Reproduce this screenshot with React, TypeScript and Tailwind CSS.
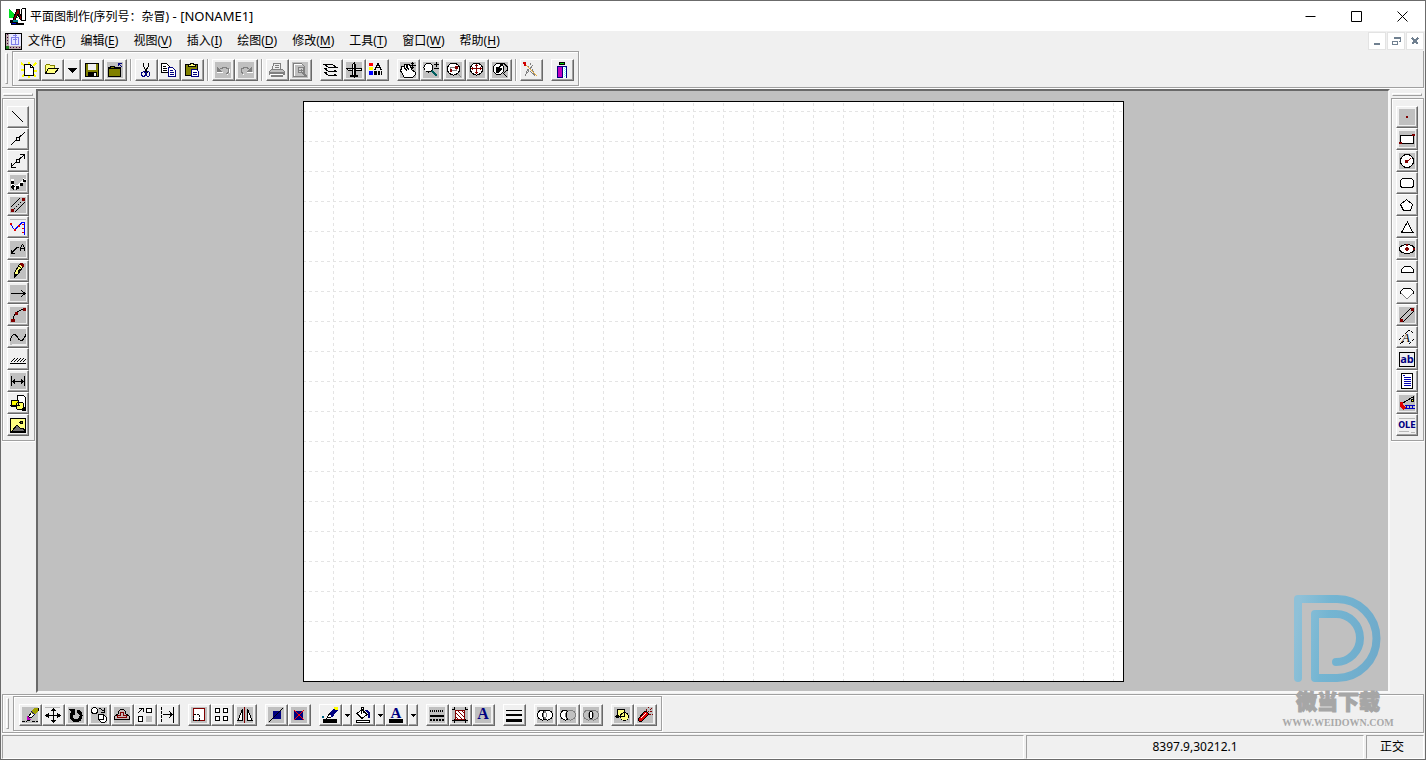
import React from "react";

type StrokeProps = { d: string; c?: string; f?: string; w?: number; dash?: string };

const P = ({ d, c = "#000", f = "none", w = 1, dash }: StrokeProps) => (
  <path d={d} stroke={c} fill={f} strokeWidth={w} strokeDasharray={dash} />
);
const F = ({ d, c = "#000" }: { d: string; c?: string }) => <path d={d} fill={c} />;
const G = () => <rect width="16" height="16" fill="#c0c0c0" />;

const NAVY = "#000080";
const RED = "#800000";
const OLIVE = "#808000";
const GREY = "#808080";
const PALE = "#ffff80";

const icons: Record<string, React.ReactNode> = {
  new: (<><P d="M0 1l4 3M7.500 0v3M15 1l-3 3M0 8h3M12 9h4M1 15l3-3M15 15l-3-3M7.500 13v3" c="#ffff00" w={2} /><P d="M3.500 2.500h6l3 3v8h-9z" f="#fff" /><P d="M9.500 2.500v3h3" /></>),
  open: (<><P d="M1.500 11.500v-8l1-1h3l1 1h4v2" f={PALE} c={OLIVE} /><P d="M1.500 11.500l3-5h10l-4 5z" f={PALE} c="#000" /></>),
  save: (<><P d="M1.500 1.500h13v13h-13z" f={OLIVE} /><F d="M4 2h8v6H4z" c="#efefef" /><F d="M4 10h9v4H4z" /><F d="M10 11h2v3h-2z" c="#efefef" /></>),
  close: (<><G /><P d="M1.500 14.500v-9h2v-1h4v1h6v9z" f={OLIVE} /><P d="M2 6.500h11" /><P d="M15 5L11.500 1.500M11.500 4v-2.500H15" c={NAVY} /></>),
  cut: (<><P d="M5.500 1v3l4 7M10.500 1v3l-4 7" /><P d="M5.500 9.500h1v1h1v3h-1v1h-2v-1h-1v-3h1zM9.500 9.500h1l1 1v3l-1 1h-1l-1-1v-3z" c={NAVY} /></>),
  copy: (<><P d="M.5 1.500h5l3 3v6h-8z" f="#fff" /><P d="M2 4.500h3M2 6.500h4M2 8.500h4" /><P d="M7.500 5.500h4l3 3v6h-7z" f="#fff" c={NAVY} /><P d="M9 8.500h3M9 10.500h4M9 12.500h4" c={NAVY} /></>),
  paste: (<><P d="M1.500 2.500h12v11h-12z" f={OLIVE} /><P d="M4.500 4.500v-2h2v-1h3v1h2v2z" f={PALE} /><P d="M7.500 7.500h5l2 2v5h-7z" f="#fff" c={NAVY} /><P d="M9 10.500h4M9 12.500h4" c={NAVY} /></>),
  undo: (<><G /><P d="M5 6.500h2v-1h4v1h2v4h-1v1h-1" c={GREY} /><F d="M2 4l5 6H2z" c={GREY} /><P d="M2 10.500h6M14.500 7v4M12 12.500h1" c="#fff" /></>),
  redo: (<><G /><P d="M11 6.500H9v-1H5v1H3v4h1v1h1" c={GREY} /><F d="M14 4l-5 6h5z" c={GREY} /><P d="M9 10.500h6M5 12.500h1" c="#fff" /></>),
  print: (<><P d="M3.500 7l1-6h7v6" c={GREY} f="#efefef" /><P d="M6 3.500h4M6 5.500h4" c={GREY} /><P d="M.5 9.500l2-2h11l2 2v3H.500z" c={GREY} f="#c0c0c0" /><P d="M1 11h14M2 14h12" c={GREY} w={2} /><P d="M1 12.500h13" c="#fff" /></>),
  preview: (<><G /><P d="M1.500 1.500h8l3 3v10h-11z" c={GREY} /><P d="M2.500 14V2.500h7" c="#fff" /><circle cx="9" cy="8" r="3" fill="#d0d0d0" stroke={GREY} /><P d="M7 8.500h4M9 6.500v4" c={GREY} /><P d="M11 11l4 4" c={GREY} w={2} /></>),
  layers: (<><P d="M1 2.500h8l5 3H6zM1 6.500l5 3h8M1 10.500l5 3h8M1 6.500h3M1 10.500h3M11 8.500l3 1M11 12.500l3 1" /></>),
  align: (<><G /><P d="M6.500 2.500l1-1h1l1 1v12h-3zM.500 6.500h15v2h-6M6 8.500H2.500l-2-2M4.500 13.500h7v1h-7z" f="#efefef" /><P d="M8.500 0v16" /></>),
  props: (<><F d="M0 1h4v3H0z" c="#ff0000" /><F d="M0 5h4v3H0z" c="#ffff00" /><F d="M0 9h4v4H0z" c="#0000ff" /><P d="M5 7.500h1l3-6 3 6h1M7 5.500h4" /><F d="M5 9h3v4H5zM9 9h2v4H9zM12 9h1v4h-1z" /></>),
  pan: (<><G /><P d="M4 15L2 11 0 8l2-1L1 4h2l1 1V2h2l2 4-1-4h2l3 6 3 2v3l-2 2z" f="#fff" /><P d="M4 5l3 4M6 4l3 4" /><P d="M12.500 0v7M9 3.500h7M11 1.500h3M11 5.500h3" /></>),
  zoom: (<><G /><circle cx="5.500" cy="5.500" r="4.500" fill="#fff" stroke="#000" /><P d="M9 9l5 5" w={2} c="#006060" /><P d="M13.500 0v5M11 2.500h5M11 6.500h5" /></>),
  zoomWindow: (<><G /><circle cx="7.500" cy="7" r="6" fill="#fff" stroke="#000" /><P d="M4.500 5.500h6v3h-6z" c={GREY} /><F d="M9 4h3v3h-3zM4 7h2v3H4z" c={RED} /><P d="M12 12l3 3" c={GREY} /></>),
  zoomAll: (<><G /><circle cx="7.500" cy="7" r="6" fill="#fff" stroke="#000" /><P d="M7.500 2v10M2 6.500h11M6 3.500h3M6 10.500h3M3.500 5v3M11.500 5v3" c={RED} /></>),
  zoomPrev: (<><G /><circle cx="6.500" cy="7" r="5.500" fill="#fff" stroke="#000" /><F d="M4 5h2l3-3h2L8 6h2v1L6 11H4z" /><P d="M8 2.500l2-1h2l3 3v4l-3 2M11 11l4 4" /></>),
  compass: (<><P d="M7 1v3M6 4l-4 10M8 4l4 10M5 7l7 7M10 3L3 12" c={GREY} dash="2 1" /><P d="M2 2l12 12" c="#e8b040" w={1} /><F d="M0 0h3v4H1z" c="#d00000" /></>),
  exit: (<><F d="M5 0h6v3H5z" /><F d="M6 1h4v1H6z" c="#00d000" /><P d="M3.500 16V4.500h9V16" c={NAVY} f="#fff" /><F d="M4 5h4v11H4z" c="#c000c0" /><P d="M8.500 5v11M4 15.500h4" c={NAVY} /><P d="M10.500 6v9M11.500 5v10" c="#80ffff" dash="1 1" /></>),
  line: <P d="M2 2l11 11" />,
  midline: (<><P d="M1 14L15 1" /><F d="M6 6h4v4H6z" /><F d="M7 7h2v2H7z" c="#efefef" /></>),
  ray: (<><P d="M1 14L15 1M1.500 10v4.500H6M10 1.500h4.500V6" /><F d="M6 6h4v4H6z" /><F d="M7 7h2v2H7z" c="#efefef" /></>),
  polyline: (<><G /><P d="M2 4v6l2 2h3l4-3 4-5" w={3} c="#fff" /><P d="M2 6v5l2 2h3l4-3 4-5" w={3} dash="3 2" /></>),
  wall: (<><G /><P d="M1 10l9-9M5 15l10-10" /><P d="M4 12l8-8" dash="1 2" /><F d="M1 12h3v3H1zM12 1h3v3h-3z" c={RED} /></>),
  dividing: (<><P d="M0 .5h16" c="#b8b8b8" /><P d="M.5 5l4 6L12 3.500h2.500v12" c="#0000ff" /><F d="M0 4h2v2H0zM4 10h2v2H4zM8 6h2v2H8zM12 5h2v1h-2zM12 9h2v1h-2zM12 13h2v1h-2z" c="#e00000" /></>),
  leader: (<><G /><P d="M9 6.500H7L1 12.500M1.500 9v3.500H5" /><F d="M12 3h1v1h-1zM11 4h1v2h-1zM13 4h1v2h-1zM10 6h1v4h-1zM14 6h1v4h-1zM11 7h3v1h-3z" /></>),
  pencil: (<><G /><P d="M4.500 13.500v-4l5-8h3v3l-5 7z" f={PALE} /><P d="M9 3l3 3M8 9l2-3" /><F d="M10 0h3v1h1v3h-1l-3-2z" c={RED} /><F d="M4 11h2l1 1-3 3z" /></>),
  arrow: (<><G /><P d="M1 8.500h14M11 5l4 3.500-4 3.500" /></>),
  arc: (<><G /><P d="M3 13Q4 4 14 2" c="#000" /><F d="M1 12h4v3H1zM5 5h3v3H5zM13 1h3v3h-3z" c={RED} /></>),
  spline: (<><G /><P d="M0 12C2 4 5 4 8 9s6 2 8-4" /><F d="M2 15h14v1H2z" c="#efefef" /></>),
  hatch: (<><F d="M0 12h16v1H0z" /><P d="M1 11l4-4M4 11l4-4M7 11l4-4M10 11l4-4M13 11l3-3" /></>),
  dimension: (<><G /><P d="M1.500 3v10M14.500 3v10M2 8.500h12" /><F d="M2 8.500l3-3v6zM14 8.500l-3-3v6z" /></>),
  symbol: (<><P d="M7.500 .5h6l2 2v10h-8z" f="#fff" /><P d="M1.500 5.500h7v6h-7z" f="#ffff00" /><circle cx="10" cy="11" r="4" fill="#ffff60" stroke="#000" /><P d="M0 10.500h10M8.500 6v5" /><F d="M12 13h4v3h-4z" /></>),
  image: (<><P d="M.5 1.500h15v14H.500z" f={PALE} /><circle cx="11.500" cy="5.500" r="1.500" fill={OLIVE} stroke="#000" /><P d="M2 14l5-6 4 4 2-1 2 3z" f="#707070" /></>),
  point: (<><G /><F d="M7 7h2v2H7z" c={RED} /></>),
  rect: (<><G /><P d="M1.500 4.500h13v8h-13z" f="#fff" /><F d="M0 11h3v2H0zM13 3h3v2h-3z" c={RED} /></>),
  circle: (<><G /><circle cx="8" cy="8" r="6.500" fill="#fff" stroke="#000" /><P d="M8 9l4-4" c={RED} /><F d="M6 7h3v3H6z" c={RED} /></>),
  rounded: <rect x="1.500" y="3.500" width="13" height="9" rx="3" fill="#fff" stroke="#000" />,
  pentagon: <P d="M7.500 2.500l6 5-2 6h-7l-3-6z" f="#fff" />,
  triangle: <P d="M8.500 3L14 13.500H2.500z" f="#fff" />,
  ellipse: (<><G /><ellipse cx="8" cy="8" rx="7.500" ry="4.500" fill="#fff" stroke="#000" /><F d="M7 3h2v2H7zM7 6h2v4H7zM6 7h4v2H6zM14 7h2v2h-2z" c={RED} /></>),
  dome: <P d="M2.500 9.500v-3l3-3h6l3 3v3z" f="#fff" />,
  sector: (<><F d="M2 6l3-2h6l3 2v2l-6 6-6-6z" c="#fff" /><P d="M2 8l6 6 6-6" c={GREY} /><P d="M1.500 8.500V6.500l3-3h7l3 3v2" /></>),
  beam: (<><G /><P d="M1 12L12 1M4 15L15 4" /><F d="M1 12h3v3H1zM12 1h3v3h-3z" c={RED} /></>),
  pathText: (<><P d="M0 11L10 1l5 3M1 15l4-3M10 15l5-5" dash="3 1" /><text x="3" y="13" fontSize="13" fontFamily="Liberation Serif, serif" fontStyle="italic">A</text></>),
  field: (<><P d="M.5 1.500h15v14H.500z" f="#efefef" /><text x="8" y="12" textAnchor="middle" fontSize="11" fontFamily="Open Sans, sans-serif" fontWeight="700" fill={NAVY}>ab</text></>),
  memo: (<><P d="M2.500 .5h11v15h-11z" f="#fff" /><F d="M4 2h2v1H4zM5 4h7v1H5zM5 6h7v1H5zM5 8h7v1H5zM5 10h7v1H5zM5 12h7v1H5z" c="#0000b0" /></>),
  measure: (<><G /><P d="M2 9L14 2v4" /><P d="M6 10.500h10M7.500 10v4M10.500 10v4M13.500 10v4M6 13.500h10" c="#0000c0" /><F d="M1 7h3v3l3 2-2 3-4-3z" c="#e00000" /><F d="M12 4h3v3h-3z" /><F d="M13 5h1v1h-1z" c="#ffff00" /></>),
  ole: (<><P d="M0 1.500h16M0 14.500h10M12 15.500h4" c="#b8b8b8" /><text x="8" y="11" textAnchor="middle" fontSize="9" fontFamily="DejaVu Sans Condensed, DejaVu Sans, sans-serif" fontWeight="700" fill={NAVY}>OLE</text></>),
  erase: (<><G /><P d="M6 10l7-9h3v3l-7 7z" f="#fff" /><F d="M12 1h4v3l-3 4-4-2z" c="#a0a000" /><P d="M9 4l4 4" c={NAVY} /><F d="M5 9l4 3-2 2H5z" c="#c000c0" /><P d="M0 14.500h5M5 13.500h4M10 14.500h6" dash="3 1" /></>),
  move: (<><P d="M0 .5h15" c="#b8b8b8" /><P d="M8.500 2v13M1 8.500h14" /><F d="M8.500 1l3 3h-6zM8.500 16l3-3h-6zM0 8.500l4-3v6zM16 8.500l-4-3v6z" /></>),
  rotate: (<><G /><path d="M9 4a5 5 0 1 1-5 2" stroke="#000" strokeWidth="3" fill="none" /><F d="M1 2h6v6H5z" /></>),
  duplicate: (<><G /><circle cx="3.500" cy="3.500" r="3" fill="#fff" stroke="#000" /><circle cx="12" cy="12" r="3.500" fill="#fff" stroke="#000" /><circle cx="10" cy="10" r="3" fill="#fff" stroke="#000" /><P d="M8 1l5 3M13.500 1v4H10" /></>),
  offset: (<><G /><P d="M4.500 6.500v-2l2-2h3l2 2v2l4 3v3h-15v-3z" f="#c8b8b8" /><P d="M6.500 8.500v-3h3v3h3v2h-9v-2z" c={RED} /></>),
  array: (<><P d="M9.500 1.500h5v4h-5zM1.500 9.500h4v5h-4z" f="#fff" w={1} /><F d="M9 9h6v6H9z" c="#c0c0c0" /><P d="M1 6l5-5M2 1.500h4V5" /></>),
  extend: (<><P d="M1.500 0v16" dash="3 1" /><P d="M13.500 0v16" /><P d="M3 7.500h9M9 4l3 3.500L9 11" /></>),
  scale: (<><G /><P d="M2.500 1.500h11v12h-11z" c={RED} f="#fff" /><P d="M2.500 7.500h6v6h-6z" dash="2 1" /></>),
  grid4: <P d="M1.500 1.500h4v4h-4zM9.500 1.500h4v4h-4zM1.500 9.500h4v4h-4zM9.500 9.500h4v4h-4z" f="#fff" />,
  mirror: (<><G /><P d="M5.500 2v11.500H1zM10.500 2v11.500H15z" f="#fff" /><P d="M7.500 0v16" c={RED} /></>),
  trim: (<><G /><F d="M5 4h8v8H5z" c={NAVY} /><P d="M1 15L15 1" /></>),
  break: (<><G /><F d="M3 4h9v9H3z" c={NAVY} /><P d="M3 3l10 10M13 3L3 13" c="#ff0000" /></>),
  pen: (<><F d="M8 6l5-6h3v3l-4 5-2 2H8z" c={NAVY} /><F d="M12 0h4v3h-3z" c="#ffff00" /><P d="M8 6l-3 5 4-1" f="#fff" /><F d="M0 9h2v2H0z" c="#006080" /><F d="M1 12h14v4H1z" /></>),
  fill: (<><P d="M7 2.500l5 5-5 4-5-5zM6.500 7V.500h2V6" f="#fff" /><F d="M10 3h3l2 3v5h-2V7z" c={NAVY} /><P d="M1.500 13.500h13v2h-13z" f="#fff" /></>),
  fontColor: (<><text x="8" y="11" textAnchor="middle" fontSize="15" fontFamily="Liberation Serif, serif" fontWeight="700" fill={NAVY}>A</text><F d="M1 12h14v4H1z" /></>),
  lineStyle: (<><G /><P d="M1 4h14" w={2} dash="1 1" /><P d="M1 9h14" w={2} /><P d="M1 13h14" w={2} dash="2 1" /></>),
  hatchStyle: (<><G /><F d="M3 3h10v10H3z" c="#fff" /><P d="M3 9l4 4M3 5l8 8M5 3l8 8M9 3l4 4" c={RED} w={1} /><P d="M2.500 0v3M2.500 12v4M13.500 0v3M13.500 12v4M0 2.500h3M13 2.500h3M0 13.500h16" /><P d="M3.500 3.500h9v9h-9z" c={RED} /></>),
  textStyle: (<><G /><text x="8" y="12" textAnchor="middle" fontSize="16" fontFamily="Liberation Serif, serif" fontWeight="700" fill={NAVY}>A</text></>),
  lineWidth: (<><F d="M0 3h16v1H0zM0 7h16v2H0zM0 12h16v3H0z" /></>),
  union: (<><G /><circle cx="5.500" cy="8" r="5" fill="#fff" stroke="#000" /><circle cx="10.500" cy="8" r="5" fill="#fff" stroke="#000" /><P d="M8 4q-3 4 0 8q3-4 0-8" c={GREY} f="#fff" /></>),
  subtract: (<><G /><circle cx="5.500" cy="8" r="5" fill="#fff" stroke="#000" /><circle cx="10.500" cy="8" r="5" fill="#c0c0c0" stroke={GREY} /><P d="M8 4q-4 4 0 8" /></>),
  intersect: (<><G /><circle cx="5.500" cy="8" r="5" fill="none" stroke={GREY} /><circle cx="10.500" cy="8" r="5" fill="none" stroke={GREY} /><P d="M8 4q-4 4 0 8q4-4 0-8" f="#fff" /></>),
  group: (<><G /><P d="M3.500 2.500h7v7h-7z" f={PALE} /><circle cx="10.500" cy="9.500" r="4" fill={PALE} stroke="#000" /><P d="M1 9.500h9M10.500 4v6" /><F d="M2 8h3v3H2z" /></>),
  explode: (<><G /><P d="M1.500 13.500v-2l6-7h2l2 2v1l-7 7h-2z" f="#e00000" /><P d="M4 11l5-5" c="#fff" /><P d="M9 4l2-3M11 5l4-4M12 7l4 1M13 4.500h3M11 .5h1" c={RED} dash="2 1" /></>),
};

const Icon = ({ name }: { name: string }) => (
  <svg viewBox="0 0 16 16" shapeRendering="crispEdges" aria-hidden="true" className="block size-4 shrink-0 overflow-visible">
    {icons[name]}
  </svg>
);

const raised =
  "shrink-0 border border-t-white border-l-white border-r-[#696969] border-b-[#696969] bg-[#f0f0f0] shadow-[inset_-1px_-1px_0_#a0a0a0]";

const ToolButton = ({ name, narrow }: { name: string; narrow?: boolean }) => (
  <button
    type="button"
    aria-label={name}
    className={`${raised} flex h-[22px] items-start p-0.5 ${narrow ? "w-[22px]" : "w-[23px]"}`}
  >
    <Icon name={name} />
  </button>
);

const DropButton = ({ wide }: { wide?: boolean }) => (
  <button
    type="button"
    aria-label="more"
    className={`${raised} flex h-[22px] items-center justify-center ${wide ? "w-[17px]" : "w-[10px]"}`}
  >
    {wide ? (
      <svg viewBox="0 0 9 5" shapeRendering="crispEdges" className="block h-[5px] w-[9px] shrink-0"><path d="M0 0h9L4.500 5z" /></svg>
    ) : (
      <svg viewBox="0 0 5 3" shapeRendering="crispEdges" className="block h-[3px] w-[5px] shrink-0"><path d="M0 0h5L2.500 3z" /></svg>
    )}
  </button>
);

const Divider = () => (
  <span className="flex w-2 shrink-0 justify-center">
    <span className="w-0.5 border-l border-l-[#a0a0a0] border-r border-r-white" />
  </span>
);

const items = (names: string) =>
  names.split(" ").map((n, i) => {
    if (n === "|") return <Divider key={i} />;
    if (n === "_") return <span key={i} className="w-2 shrink-0" />;
    if (n === "v") return <DropButton key={i} />;
    if (n === "V") return <DropButton key={i} wide />;
    return <ToolButton key={i} name={n} />;
  });

const HBar = ({ names, label }: { names: string; label: string }) => (
  <div className="flex">
    <div className="my-0.5 mr-1 ml-[3px] w-[3px] border border-t-white border-l-white border-r-[#a0a0a0] border-b-[#a0a0a0]" />
    <div role="toolbar" aria-label={label} className="flex border border-[#a0a0a0] pt-[7px] pr-1 pb-1 pl-[5px] shadow-[inset_1px_1px_0_#fff,1px_1px_0_#fff]">
      {items(names)}
    </div>
  </div>
);

const VBar = ({ names, label }: { names: string; label: string }) => (
  <aside className="flex w-[35px] shrink-0 flex-col px-px pt-1">
    <div className="mr-0.5 mb-0.5 ml-px h-[3px] border border-t-white border-l-white border-r-[#a0a0a0] border-b-[#a0a0a0]" />
    <div role="toolbar" aria-label={label} className="flex flex-col items-start border border-[#a0a0a0] pt-[7px] pb-1 pl-1 shadow-[inset_1px_1px_0_#fff,0_1px_0_#fff]">
      {names.split(" ").map((n) => (
        <ToolButton key={n} name={n} narrow />
      ))}
    </div>
  </aside>
);

const menus = [
  ["文件", "F"], ["编辑", "E"], ["视图", "V"], ["插入", "I"], ["绘图", "D"],
  ["修改", "M"], ["工具", "T"], ["窗口", "W"], ["帮助", "H"],
];

const Caption = ({ label, d }: { label: string; d: string }) => (
  <button type="button" aria-label={label} className="flex w-[46px] items-center justify-center">
    <svg viewBox="0 0 11 11" className="size-[11px]" fill="none" stroke="#000"><path d={d} /></svg>
  </button>
);

const MdiButton = ({ label, children }: { label: string; children: React.ReactNode }) => (
  <button type="button" aria-label={label} className="flex size-[18px] items-center justify-center border border-[#e3e3e3] bg-white">
    <svg viewBox="0 0 10 10" className="size-[10px]" shapeRendering="crispEdges" fill="none" stroke="#708090">{children}</svg>
  </button>
);

const panel = "flex items-center justify-center border border-t-[#a0a0a0] border-l-[#a0a0a0] border-r-white border-b-white";

export default function App() {
  return (
    <div className="relative flex min-h-screen flex-col border border-[#6b6b6b] bg-[#f0f0f0] font-['Noto_Sans','Noto_Sans_CJK_SC',sans-serif] text-xs text-black">
      <header className="flex h-[30px] shrink-0 bg-white">
        <div className="flex flex-1 items-center gap-1 pl-2">
          <svg viewBox="0 0 17 17" shapeRendering="crispEdges" className="size-[17px]">
            <path d="M0 1l10 9H0z" fill="#00e020" />
            <path d="M8 1h2v2l3 8h-2L9 6l-3 6H4z" stroke="#000" fill="#800000" />
            <path d="M12 2l2-2h2v12h-4z" fill="#fff" stroke="#000" />
            <path d="M1 12h5l3 3h6v2H2z" fill="#000" />
            <path d="M4 12h5v2H4z" fill="#008080" />
            <path d="M3 15h4v1H3z" fill="#0000d0" />
          </svg>
          <h1 className="leading-4 whitespace-pre">
            平面图制作(序列号：杂冒)<span className="text-[13px]"> - [NONAME1]</span>
          </h1>
        </div>
        <Caption label="最小化" d="M.5 5.500h10" />
        <Caption label="最大化" d="M.5 .5h10v10H.500z" />
        <Caption label="关闭" d="M.5 .5l10 10M10.500 .5L.500 10.500" />
      </header>

      <nav className="flex h-5 shrink-0 items-center">
        <svg viewBox="0 0 17 17" shapeRendering="crispEdges" className="ml-1 size-[17px]">
          <path d="M0 0h17v17H0z" fill="#000" />
          <path d="M1 1h3v15H1zM4 13h12v3H4z" fill="#b8a8a8" />
          <path d="M4 1h12v12H4z" fill="#e8e8ff" />
          <path d="M2.500 1v15M5 14.500h11" stroke="#400040" strokeDasharray="1 2" />
          <path d="M6.500 4.500h7v7h-7zM8 2.500h4M8 6.500h4M10.500 1v11" fill="none" stroke="#8080e8" />
          <path d="M1 13h3v3H1z" fill="#208020" />
        </svg>
        <div className="flex flex-1 gap-px">
          {menus.map(([name, key]) => (
            <button type="button" key={key} className="px-[7px] leading-5 first:pl-[6px]">
              {name}(<u className="underline underline-offset-2">{key}</u>)
            </button>
          ))}
        </div>
        <div className="mr-px flex gap-px">
          <MdiButton label="最小化文档"><path d="M2 8h6" strokeWidth="2" /></MdiButton>
          <MdiButton label="还原文档"><path d="M3.500 3V1.500h6v4H8M1.500 5.500h5v3h-5zM3 2h7M1 5h6" /></MdiButton>
          <MdiButton label="关闭文档"><path d="M2 2l6 6M8 2l-6 6" strokeWidth="2" /></MdiButton>
        </div>
      </nav>

      <div className="mx-px mb-px shrink-0 border-r border-b border-[#a0a0a0] pb-px shadow-[0_1px_0_#fff]">
        <HBar label="标准" names="new open V save close | cut copy paste | undo redo | print preview _ layers align props _ pan zoom zoomWindow zoomAll zoomPrev | compass _ exit" />
      </div>

      <main className="flex flex-1">
        <VBar label="绘图" names="line midline ray polyline wall dividing leader pencil arrow arc spline hatch dimension symbol image" />
        <section className="flex flex-1 items-center justify-center border-2 border-t-[#696969] border-r-[#f8f8f8] border-b-[#f8f8f8] border-l-[#696969] bg-[#c0c0c0] pt-px pl-px">
          <div className="h-[581px] w-[821px] border border-black bg-white">
            <svg className="block size-full" shapeRendering="crispEdges" aria-hidden="true">
              <defs>
                <pattern id="grid" width="30" height="30" patternUnits="userSpaceOnUse">
                  <path d="M29.500 1V30M-1 9.500H30" stroke="#e4e4e4" strokeDasharray="3 3" />
                </pattern>
              </defs>
              <rect width="100%" height="100%" fill="url(#grid)" />
            </svg>
          </div>
        </section>
        <VBar label="形状" names="point rect circle rounded pentagon triangle ellipse dome sector beam pathText field memo measure ole" />
      </main>

      <div className="mx-px mt-px shrink-0 border border-[#a0a0a0] py-px shadow-[inset_1px_1px_0_#fff,0_1px_0_#fff]">
        <HBar label="修改" names="erase move rotate duplicate offset array extend _ scale grid4 mirror _ trim break _ pen v fill v fontColor v _ lineStyle hatchStyle textStyle _ lineWidth _ union subtract intersect _ group explode" />
      </div>

      <footer className="mx-px mt-0.5 flex h-6 shrink-0 gap-0.5">
        <div className={`${panel} flex-1`} />
        <div className={`${panel} w-[338px]`}>8397.9,30212.1</div>
        <div className={`${panel} w-[58px] pr-1.5`}>正交</div>
      </footer>

      <div className="pointer-events-none absolute right-8 bottom-[26px] flex w-[110px] flex-col items-center">
        <svg viewBox="0 0 96 96" className="mb-0.5 size-24" fill="none" strokeWidth="8" strokeLinecap="round" strokeLinejoin="round">
          <defs>
            <linearGradient id="mark" gradientUnits="userSpaceOnUse" x1="4" y1="48" x2="92" y2="60">
              <stop offset="0" stopColor="#8fc1d8" />
              <stop offset=".35" stopColor="#74b5d2" />
              <stop offset="1" stopColor="#6faaca" />
            </linearGradient>
          </defs>
          <path d="M8 87V8H47A39.500 39.500 0 0 1 47 87H25V23H46A24 24 0 0 1 46 71" stroke="url(#mark)" />
        </svg>
        <div className="text-[21px] leading-6 font-black text-[#a6a6a6] [-webkit-text-stroke:1px_#a6a6a6]">微当下载</div>
        <div className="font-['Liberation_Serif',serif] text-[10px] leading-5 font-bold text-[#a9a9a9]">WWW.WEIDOWN.COM</div>
      </div>
    </div>
  );
}
